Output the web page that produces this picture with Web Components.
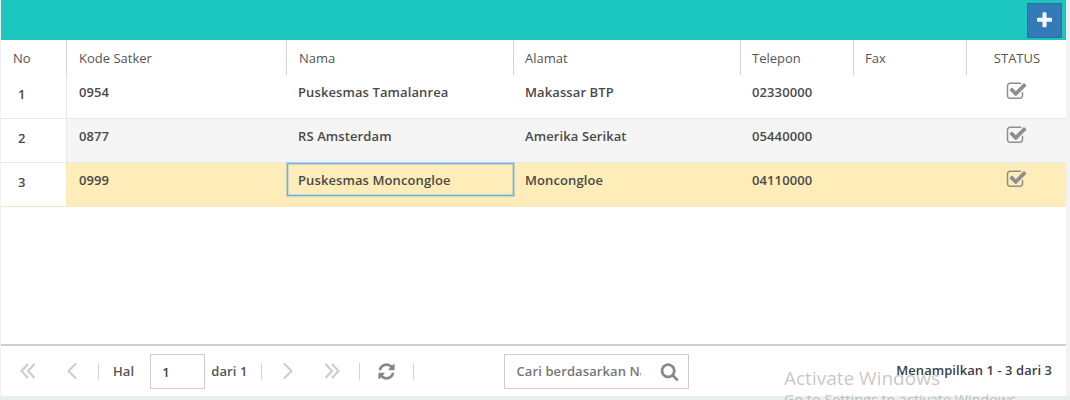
<!DOCTYPE html>
<html>
<head>
<meta charset="utf-8">
<title>Satker</title>
<style>
  html, body { margin: 0; height: 100%; overflow: hidden; }
  html { background: linear-gradient(#f3f3f3 396px, #e9eeee 396px); }
  body { font: 13px "Open Sans", sans-serif; color: #555; }
</style>
</head>
<body>
<satker-panel>
  <grid-toolbar slot="toolbar"></grid-toolbar>
  <grid-header slot="table"></grid-header>
  <grid-row slot="table" no="1" kode="0954" nama="Puskesmas Tamalanrea" alamat="Makassar BTP" telepon="02330000"></grid-row>
  <grid-row slot="table" no="2" kode="0877" nama="RS Amsterdam" alamat="Amerika Serikat" telepon="05440000" alt></grid-row>
  <grid-row slot="table" no="3" kode="0999" nama="Puskesmas Moncongloe" alamat="Moncongloe" telepon="04110000" selected></grid-row>
  <grid-pager slot="pager"></grid-pager>
</satker-panel>
<windows-mark></windows-mark>

<script>
const COLS = "66px 220px 227px 227px 113px 113px 99px";

const ICONS = {
  plus: "M1600 736v192q0 40-28 68t-68 28h-416v416q0 40-28 68t-68 28h-192q-40 0-68-28t-28-68v-416h-416q-40 0-68-28t-28-68v-192q0-40 28-68t68-28h416v-416q0-40 28-68t68-28h192q40 0 68 28t28 68v416h416q40 0 68 28t28 68z",
  check: "M1472 930v318q0 119-84.5 203.5t-203.5 84.5h-832q-119 0-203.5-84.5t-84.5-203.5v-832q0-119 84.5-203.5t203.5-84.5h832q63 0 117 25 15 7 18 23 3 17-9 29l-49 49q-10 10-23 10-3 0-9-2-23-6-45-6h-832q-66 0-113 47t-47 113v832q0 66 47 113t113 47h832q66 0 113-47t47-113v-254q0-13 9-22l64-64q10-10 23-10 6 0 12 3 20 8 20 29zm231-489l-814 814q-24 24-57 24t-57-24l-430-430q-24-24-24-57t24-57l110-110q24-24 57-24t57 24l263 263 647-647q24-24 57-24t57 24l110 110q24 24 24 57t-24 57z",
  refresh: "M1639 1056q0 5-1 7-64 268-268 434.5t-478 166.5q-146 0-282.5-55t-243.5-157l-129 129q-19 19-45 19t-45-19-19-45v-448q0-26 19-45t45-19h448q26 0 45 19t19 45-19 45l-137 137q71 66 161 102t187 36q134 0 250-65t186-179q11-17 53-117 8-23 30-23h192q13 0 22.5 9.5t9.5 22.5zm25-800v448q0 26-19 45t-45 19h-448q-26 0-45-19t-19-45 19-45l138-138q-148-137-349-137-134 0-250 65t-186 179q-11 17-53 117-8 23-30 23h-199q-13 0-22.5-9.5t-9.5-22.5v-7q65-268 270-434.5t480-166.5q146 0 284 55.5t245 156.5l130-129q19-19 45-19t45 19 19 45z",
  search: "M1216 832q0-185-131.5-316.5t-316.5-131.5-316.5 131.5-131.5 316.5 131.5 316.5 316.5 131.5 316.5-131.5 131.5-316.5zm512 832q0 52-38 90t-90 38q-54 0-90-38l-343-342q-179 124-399 124-143 0-273.5-55.5t-225-150-150-225-55.5-273.5 55.5-273.5 150-225 225-150 273.5-55.5 273.5 55.5 225 150 150 225 55.5 273.5q0 220-124 399l343 343q37 37 37 90z"
};

function faIcon(name, size, color) {
  return `<svg width="${size}" height="${size}" viewBox="0 0 1792 1792" fill="${color}" style="display:block"><path d="${ICONS[name]}"/></svg>`;
}

class SatkerPanel extends HTMLElement {
  constructor() {
    super();
    this.shadow = this.attachShadow({ mode: "open" });
  }
  connectedCallback() {
    this.shadow.innerHTML = `
      <style>
        :host { display: flex; flex-direction: column; width: 1066px; height: 396px; box-sizing: border-box; border-left: 1px solid #f0f0f0; background: #fff; }
        .table { flex: 1; min-height: 0; }
        .pager { border-top: 2px solid #cfd1d1; }
      </style>
      <slot name="toolbar"></slot>
      <div class="table"><slot name="table"></slot></div>
      <div class="pager"><slot name="pager"></slot></div>`;
  }
}

class GridToolbar extends HTMLElement {
  constructor() {
    super();
    this.shadow = this.attachShadow({ mode: "open" });
  }
  connectedCallback() {
    this.shadow.innerHTML = `
      <style>
        :host { display: flex; justify-content: flex-end; align-items: flex-start; height: 37px; padding: 3px 4px 0 0; background: #1cc7bf; }
        button { width: 35px; height: 35px; padding: 0; display: flex; align-items: center; justify-content: center; background: #337ab7; border: 1px solid #2e6da4; }
      </style>
      <button aria-label="Tambah">${faIcon("plus", 19, "#f4f7fa")}</button>`;
  }
}

class GridHeader extends HTMLElement {
  constructor() {
    super();
    this.shadow = this.attachShadow({ mode: "open" });
  }
  connectedCallback() {
    const titles = ["No", "Kode Satker", "Nama", "Alamat", "Telepon", "Fax", "STATUS"];
    this.shadow.innerHTML = `
      <style>
        :host { display: grid; grid-template-columns: ${COLS}; height: 35px; background: #fff; }
        div { display: flex; align-items: center; padding: 0 0 0 11px; border-right: 1px solid #d4d6d6; color: #555; }
        div:nth-of-type(1), div:nth-of-type(2), div:nth-of-type(3) { padding-left: 12px; }
        div:last-child { justify-content: center; padding: 0 0 0 1px; border: 0; }
      </style>
      ${titles.map(t => `<div>${t}</div>`).join("")}`;
  }
}

class GridRow extends HTMLElement {
  constructor() {
    super();
    this.shadow = this.attachShadow({ mode: "open" });
  }
  connectedCallback() {
    const a = n => this.getAttribute(n) || "";
    this.shadow.innerHTML = `
      <style>
        :host { display: grid; grid-template-columns: ${COLS}; height: 44px; box-sizing: border-box; border-bottom: 1px solid #e8e8e8; background: #fff; font-weight: 600; color: #4a4a4a; letter-spacing: .1px; }
        :host([alt]) { background: #f5f5f5; }
        :host([selected]) { background: #feedb8; border-bottom-color: #f5e6c4; }
        .cell { height: 33px; box-sizing: border-box; padding: 0 11px; display: flex; align-items: center; white-space: nowrap; }
        .cell:nth-of-type(2) { padding-left: 12px; }
        .no { height: auto; background: #fff; align-items: flex-start; padding: 10px 0 0 17px; border-right: 1px solid #e8e8e8; }
        :host([selected]) .no { border-right-color: #f5e6c4; }
        .focus { box-shadow: inset 0 0 0 1px #66afe9, inset 0 0 1px 2px rgba(102,175,233,.35), 0 0 1px 1px rgba(102,175,233,.35); }
        .status { justify-content: center; padding: 0; }
      </style>
      <div class="cell no">${a("no")}</div>
      <div class="cell">${a("kode")}</div>
      <div class="cell ${this.hasAttribute("selected") ? "focus" : ""}">${a("nama")}</div>
      <div class="cell">${a("alamat")}</div>
      <div class="cell">${a("telepon")}</div>
      <div class="cell"></div>
      <div class="cell status">${faIcon("check", 21, "#8e8e8e")}</div>`;
  }
}

class GridPager extends HTMLElement {
  constructor() {
    super();
    this.shadow = this.attachShadow({ mode: "open" });
  }
  chev(points) {
    return points.map(p => `<polyline points="${p}" fill="none" stroke="#c9cccc" stroke-width="2"/>`).join("");
  }
  connectedCallback() {
    const dbl = (l) => `<svg width="16" height="16" viewBox="0 0 16 16">${this.chev(l ? ["8,1 1.5,8 8,15", "14.5,1 8,8 14.5,15"] : ["1.5,1 8,8 1.5,15", "8,1 14.5,8 8,15"])}</svg>`;
    const one = (l) => `<svg width="12" height="16" viewBox="0 0 12 16">${this.chev([l ? "10,.5 2.5,8 10,15.5" : "2,.5 9.5,8 2,15.5"])}</svg>`;
    this.shadow.innerHTML = `
      <style>
        :host { display: flex; align-items: center; height: 50px; padding: 0 14px 0 19px; box-sizing: border-box; color: #555; font-weight: 600; letter-spacing: .1px; }
        .sep { width: 1px; height: 17px; background: #d4d6d6; flex: none; }
        .ico { display: flex; flex: none; }
        .page { width: 55px; height: 35px; box-sizing: border-box; border: 1px solid #ccc; display: flex; align-items: center; padding: 2px 0 0 11px; color: #444; }
        .search { width: 185px; height: 35px; box-sizing: border-box; border: 1px solid #ccc; display: flex; align-items: center; padding: 0 9px 0 12px; margin-left: 90px; justify-content: space-between; color: #777; }
        .search span { width: 124px; overflow: hidden; white-space: nowrap; }
        .count { margin-left: auto; color: #3c3f44; letter-spacing: .05px; white-space: nowrap; position: relative; top: -1px; z-index: 1; }
      </style>
      <span class="ico">${dbl(true)}</span>
      <span class="ico" style="margin-left:30px">${one(true)}</span>
      <span class="sep" style="margin-left:20px"></span>
      <span style="margin-left:14px">Hal</span>
      <span class="page" style="margin-left:16px">1</span>
      <span style="margin-left:6px">dari 1</span>
      <span class="sep" style="margin-left:13px"></span>
      <span class="ico" style="margin-left:20px">${one(false)}</span>
      <span class="ico" style="margin-left:30px">${dbl(false)}</span>
      <span class="sep" style="margin-left:19px"></span>
      <span class="ico" style="margin-left:17px">${faIcon("refresh", 19, "#888")}</span>
      <span class="sep" style="margin-left:17px"></span>
      <div class="search"><span>Cari berdasarkan Nama</span>${faIcon("search", 19, "#888")}</div>
      <span class="count">Menampilkan 1 - 3 dari 3</span>`;
  }
}

class WindowsMark extends HTMLElement {
  constructor() {
    super();
    this.shadow = this.attachShadow({ mode: "open" });
  }
  connectedCallback() {
    this.shadow.innerHTML = `
      <style>
        :host { position: absolute; left: 784px; top: 365px; width: 286px; height: 35px; overflow: hidden; color: rgba(120,120,120,.42); pointer-events: none; white-space: nowrap; }
        .big { font-size: 19px; line-height: 26px; }
        .small { font-size: 14.4px; line-height: 18px; }
      </style>
      <div class="big">Activate Windows</div>
      <div class="small">Go to Settings to activate Windows.</div>`;
  }
}

customElements.define("satker-panel", SatkerPanel);
customElements.define("grid-toolbar", GridToolbar);
customElements.define("grid-header", GridHeader);
customElements.define("grid-row", GridRow);
customElements.define("grid-pager", GridPager);
customElements.define("windows-mark", WindowsMark);
</script>
</body>
</html>
